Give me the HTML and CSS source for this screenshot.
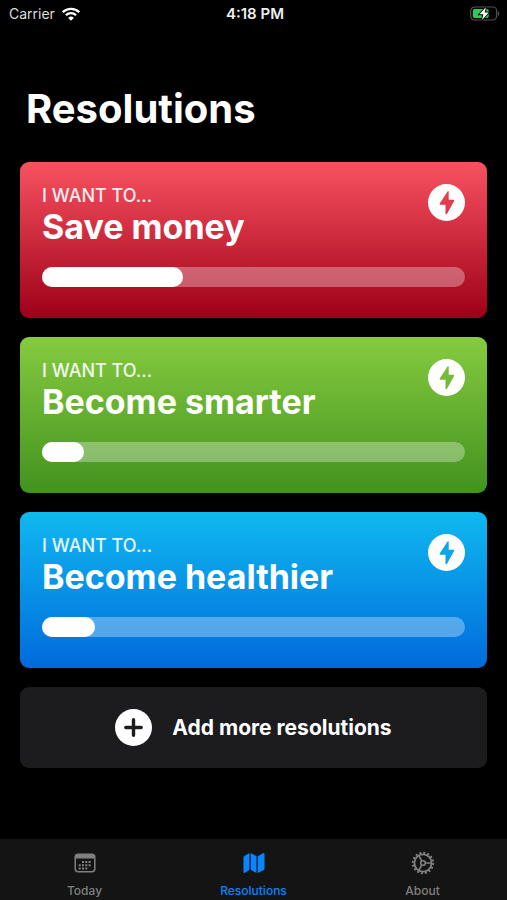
FILE: index.html
```html
<!DOCTYPE html>
<html lang="en">
<head>
<meta charset="utf-8">
<meta name="viewport" content="width=device-width, initial-scale=1">
<title>Resolutions</title>
<link rel="stylesheet" href="styles.css">
</head>
<body>
<svg class="sprite" width="0" height="0" aria-hidden="true">
  <symbol id="bolt" viewBox="0 0 37 37">
    <path fill="#fff" fill-rule="evenodd" d="M18.500 0a18.500 18.500 0 1 1 0 37a18.500 18.500 0 1 1 0-37ZM19.700 7.200L11.700 19.600Q11.200 20.700 12.200 20.700H17.500V29.400Q17.900 31 19 29.800L26.100 16.900Q26.500 15.700 25.400 15.700H20.700V7.700Q20.500 6.400 19.700 7.200Z"/>
  </symbol>
</svg>
<div class="app">
  <header class="status">
    <div class="status-left">
      <span>Carrier</span>
      <svg width="18" height="14" viewBox="0 0 18 14" aria-label="Wi-Fi">
        <g fill="none" stroke="#fff" stroke-width="2.300"><path d="M.8 5.200a11.600 11.600 0 0 1 16.400 0"/><path d="M3.900 8.300a7.200 7.200 0 0 1 10.200 0"/></g>
        <path fill="#fff" d="M9 13.700L6.200 10.900a4 4 0 0 1 5.600 0Z"/>
      </svg>
    </div>
    <time class="clock">4:18 PM</time>
    <svg class="battery" width="31" height="15" viewBox="0 0 31 15" aria-label="Battery charging">
      <rect x=".7" y="1" width="26" height="13" rx="4" fill="none" stroke="#555" stroke-width="1.200"/>
      <path fill="#555" d="M28 5a3 3 0 0 1 0 5Z"/>
      <rect x="2.800" y="3" width="16" height="9" rx="2" fill="#35c759"/>
      <path fill="#fff" stroke="#000" stroke-width="1.800" paint-order="stroke" d="M16 1L9.500 8.300H13.400L12 14L18.800 6.500H14.700Z"/>
    </svg>
  </header>
  <main class="content">
    <h1 class="title">Resolutions</h1>
    <section class="list">
      <article class="card red">
        <div class="card-head">
          <div><p class="lead">I WANT TO...</p><h2 class="goal">Save money</h2></div>
          <button class="round" aria-label="Act on Save money"><svg width="37" height="37"><use href="#bolt"/></svg></button>
        </div>
        <div class="track" role="progressbar" aria-label="Save money" aria-valuenow="33"><div class="fill" style="width:33.4%"></div></div>
      </article>
      <article class="card green">
        <div class="card-head">
          <div><p class="lead">I WANT TO...</p><h2 class="goal">Become smarter</h2></div>
          <button class="round" aria-label="Act on Become smarter"><svg width="37" height="37"><use href="#bolt"/></svg></button>
        </div>
        <div class="track" role="progressbar" aria-label="Become smarter" aria-valuenow="10"><div class="fill" style="width:10%"></div></div>
      </article>
      <article class="card blue">
        <div class="card-head">
          <div><p class="lead">I WANT TO...</p><h2 class="goal">Become healthier</h2></div>
          <button class="round" aria-label="Act on Become healthier"><svg width="37" height="37"><use href="#bolt"/></svg></button>
        </div>
        <div class="track" role="progressbar" aria-label="Become healthier" aria-valuenow="12"><div class="fill" style="width:12.5%"></div></div>
      </article>
      <button class="add">
        <svg width="37" height="37" viewBox="0 0 37 37" aria-hidden="true"><circle cx="18.500" cy="18.500" r="18.500" fill="#fff"/><path d="M18.500 10.800v15.400M10.800 18.500h15.400" stroke="#1c1c1e" stroke-width="3.400" stroke-linecap="round"/></svg>
        <span>Add more resolutions</span>
      </button>
    </section>
  </main>
  <nav class="tabs">
    <a class="tab" href="#today">
      <svg width="24" height="24" viewBox="0 0 24 24" aria-hidden="true">
        <rect x="2.200" y="3.200" width="19.600" height="17.600" rx="3" fill="none" stroke="currentColor" stroke-width="1.500"/>
        <path fill="currentColor" d="M2 7.500V6q0-3 3-3h14q3 0 3 3v1.500Z"/>
        <path stroke="currentColor" stroke-width="2" stroke-dasharray="2 1.300" d="M9 11h9M5.700 14.200h12.300M5.700 17.400h8.800"/>
      </svg>
      <span>Today</span>
    </a>
    <a class="tab active" href="#resolutions" aria-current="page">
      <svg width="24" height="24" viewBox="0 0 24 24" aria-hidden="true">
        <path fill="currentColor" d="M1.500 6.500Q1.500 5.500 2.300 5L7.500 2V18.800L3 21.800Q1.500 22.500 1.500 21ZM8.700 2L14.500 5.200V22L8.700 18.800ZM15.700 5.200L21 2.200Q22.500 1.500 22.500 3V17.700Q22.500 18.500 21.800 19L15.700 22Z"/>
      </svg>
      <span>Resolutions</span>
    </a>
    <a class="tab" href="#about">
      <svg width="24" height="24" viewBox="0 0 24 24" aria-hidden="true" fill="none" stroke="currentColor">
        <circle cx="12" cy="12" r="8.600" stroke-width="1.800"/>
        <circle cx="12" cy="12" r="10.200" stroke-width="2" stroke-dasharray="2 2.006"/>
        <circle cx="12" cy="12" r="2.300" stroke-width="1.600"/>
        <path stroke-width="1.600" d="M14.300 12h6.500M10.900 10L7.600 4.400M10.900 14l-3.300 5.600"/>
      </svg>
      <span>About</span>
    </a>
  </nav>
</div>
</body>
</html>
```
FILE: styles.css
```css
* { box-sizing: border-box; }
body {
  margin: 0;
  background: #000;
  color: #fff;
  font-family: Inter, "Liberation Sans", sans-serif;
}
h1, h2, p { margin: 0; }
button { border: 0; padding: 0; font: inherit; color: inherit; cursor: pointer; }
svg { display: block; flex: none; }
.sprite { position: absolute; }
.app { display: flex; flex-direction: column; min-height: 100vh; }

.status {
  display: grid;
  grid-template-columns: 1fr auto 1fr;
  align-items: center;
  height: 27px;
  padding: 0 6px 0 9px;
  font-size: 14px;
}
.status-left { display: flex; align-items: center; gap: 7px; color: #ddd; }
.clock { font-size: 15px; font-weight: 600; color: #eee; }
.battery { justify-self: end; }

.content { flex: 1; padding: 57px 20px 24px; }
.title { padding: 0 6px; font-size: 40px; line-height: 50px; font-weight: 700; }
.list { display: flex; flex-direction: column; gap: 19px; margin-top: 28px; }

.card { padding: 22px 22px 31px; border-radius: 9px; }
.red { background: linear-gradient(#f85260, #9e0018); }
.green { background: linear-gradient(#86cb40, #42921f); }
.blue { background: linear-gradient(#10b9f0, #006bdc); }
.card-head { display: flex; justify-content: space-between; align-items: flex-start; }
.lead { font-size: 18px; line-height: 24px; font-weight: 500; opacity: .9; }
.goal { font-size: 34px; line-height: 38px; font-weight: 700; }
.round { border-radius: 50%; background: none; }
.track { height: 20px; margin-top: 21px; border-radius: 10px; background: rgb(255 255 255 / 32%); }
.fill { height: 100%; border-radius: 10px; background: #fff; }

.add {
  display: flex;
  align-items: center;
  justify-content: center;
  gap: 20px;
  height: 81px;
  border-radius: 9px;
  background: #1c1c1e;
  font-size: 21px;
  font-weight: 700;
}

.tabs { display: flex; height: 61px; background: #141414; }
.tab {
  flex: 1;
  display: flex;
  flex-direction: column;
  align-items: center;
  gap: 8px;
  padding-top: 12px;
  color: #808080;
  font-size: 12px;
  line-height: 16px;
  font-weight: 500;
  text-decoration: none;
}
.tab.active { color: #0a84ff; }
```
